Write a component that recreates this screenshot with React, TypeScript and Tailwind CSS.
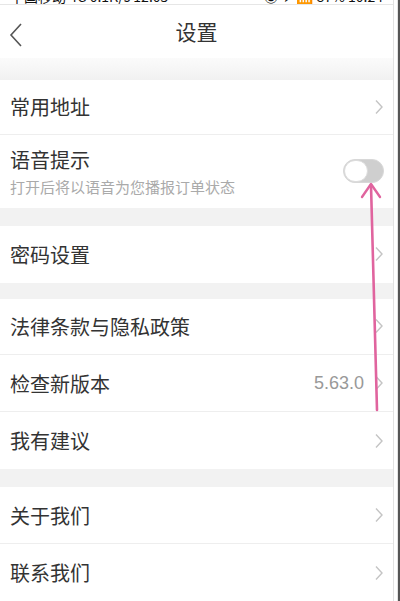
import React from "react";

const font = { fontFamily: '"Noto Sans CJK SC", "Noto Sans", sans-serif' };

function Chevron() {
  return (
    <svg width="10" height="16" viewBox="0 0 10 16" className="shrink-0">
      <path d="M2 1.5 L8 8 L2 14.5" fill="none" stroke="#c4c4c4" strokeWidth="1.4" />
    </svg>
  );
}

function Row({ title, right, h = "h-[57px]", border = true }: { title: string; right?: React.ReactNode; h?: string; border?: boolean }) {
  return (
    <div className={`flex items-center justify-between pl-[10px] pr-[9px] bg-white ${h} ${border ? "border-b border-[#eeeeee]" : ""}`}>
      <span className="text-[20px] text-[#333] pt-[1px]">{title}</span>
      <div className="flex items-center gap-[10px]">
        {right}
        <Chevron />
      </div>
    </div>
  );
}

function Gap({ h }: { h: string }) {
  return <div className={`${h} bg-[#f2f2f2]`} />;
}

export default function App() {
  return (
    <div className="relative w-[400px] h-[601px] overflow-hidden bg-white flex" style={font}>
      <div className="flex-1 flex flex-col border-r border-[#e2e2e2]">
        {/* status bar remnant */}
        <div className="h-[5px] overflow-hidden border-b border-[#e6e6e6] bg-white">
          <div className="flex justify-between px-[10px] -mt-[11px] text-[14px] text-[#111] leading-none">
            <span>中国移动 4G 0.1K/s 12:05</span>
            <span>◉ ✈ 📶 87% 10:24</span>
          </div>
        </div>
        {/* nav */}
        <div className="h-[53px] flex items-center relative bg-white">
          <svg width="14" height="24" viewBox="0 0 14 24" className="absolute left-[9px] top-[18px]">
            <path d="M12 1 L2 12 L12 23" fill="none" stroke="#555" strokeWidth="1.6" />
          </svg>
          <div className="flex-1 text-center text-[21px] text-[#333] pt-[1px]">设置</div>
        </div>
        <div className="h-[22px] bg-gradient-to-b from-[#fbfbfb] to-[#f1f1f1]" />
        <Row title="常用地址" h="h-[55px]" />
        <div className="h-[73px] flex items-center justify-between pl-[10px] pr-[9px] bg-white">
          <div className="flex flex-col">
            <span className="text-[20px] text-[#333] leading-[28px]">语音提示</span>
            <span className="text-[15px] text-[#aaa] leading-[20px] mt-[3px]">打开后将以语音为您播报订单状态</span>
          </div>
          <div className="relative w-[41px] h-[24px] rounded-full bg-[#cfcfcf] border border-[#d8d8d8]">
            <div className="absolute left-0 top-0 w-[24px] h-[22px] rounded-full bg-white border border-[#dcdcdc]" />
          </div>
        </div>
        <Gap h="h-[18px]" />
        <Row title="密码设置" border={false} />
        <Gap h="h-[16px]" />
        <Row title="法律条款与隐私政策" />
        <Row title="检查新版本" right={<span className="text-[18px] text-[#999]" style={{ fontFamily: '"Liberation Sans", sans-serif' }}>5.63.0</span>} />
        <Row title="我有建议" border={false} />
        <Gap h="h-[18px]" />
        <Row title="关于我们" />
        <Row title="联系我们" border={false} />
        <div className="flex-1 bg-gradient-to-b from-[#f4f4f4] to-[#e4e4e4]" />
      </div>
      <div className="w-[4px] bg-white border-r border-[#e4e4e4]" />
      <div className="w-[2px] bg-[#555]" />

      {/* pink annotation arrow */}
      <svg className="absolute left-0 top-0 pointer-events-none" width="400" height="601" viewBox="0 0 400 601">
        <path d="M377 410 L371 185" stroke="#e0649e" strokeWidth="2.6" fill="none" strokeLinecap="round" />
        <path d="M362 197 L371 184 L380 197" stroke="#e0649e" strokeWidth="2.4" fill="none" strokeLinecap="round" strokeLinejoin="round" />
      </svg>
    </div>
  );
}
